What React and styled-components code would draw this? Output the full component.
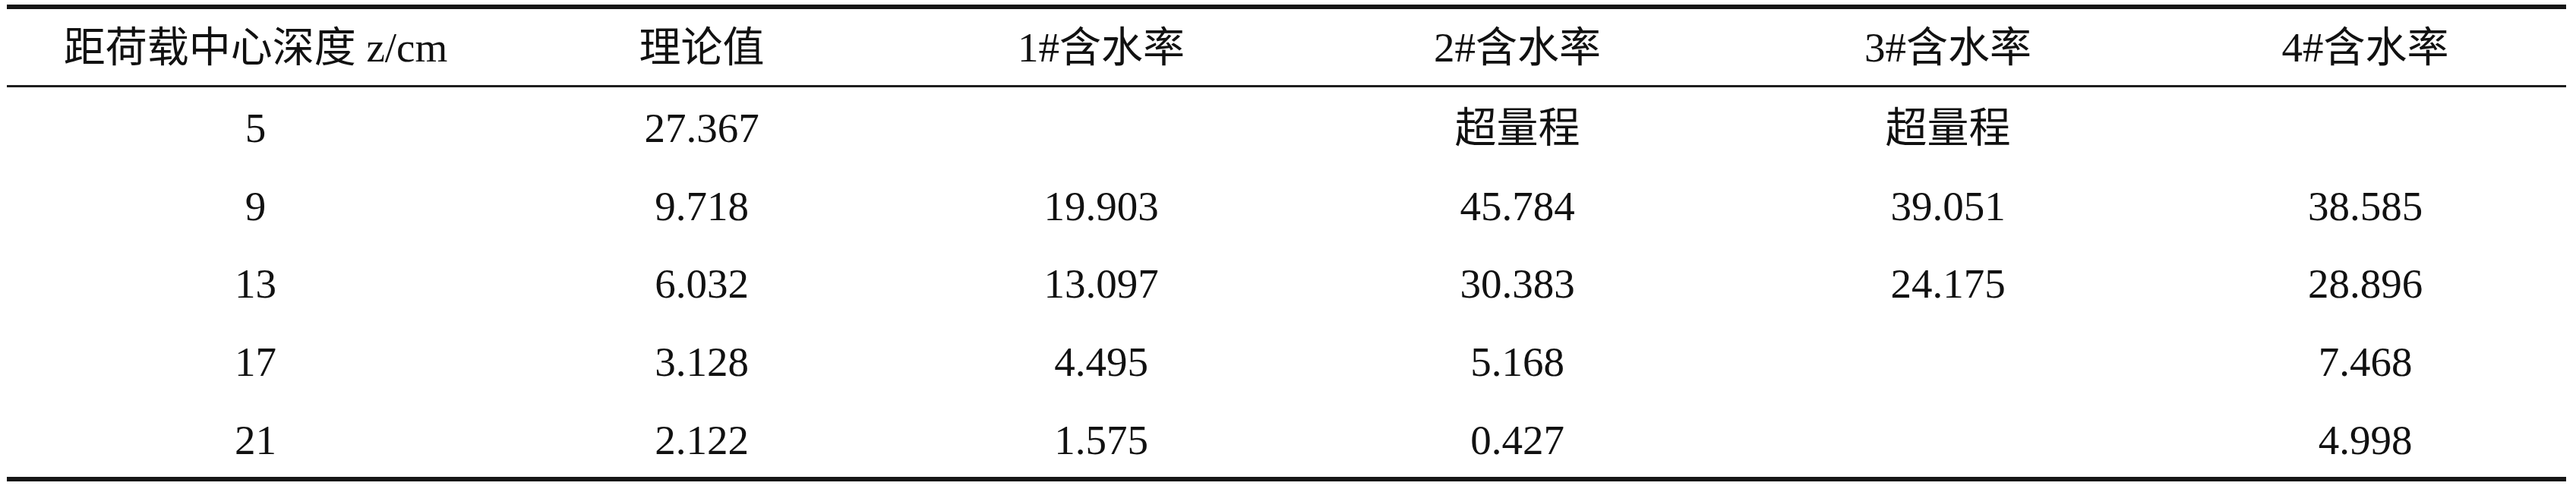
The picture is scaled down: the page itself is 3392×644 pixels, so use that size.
import React from "react";
import styled, { createGlobalStyle } from "styled-components";

const Global = createGlobalStyle`
  html, body { margin: 0; padding: 0; background: #ffffff; }
  body { width: 3392px; height: 644px; overflow: hidden; }
`;

const Page = styled.div`
  padding: 6px 0 0 9px;
  box-sizing: border-box;
  width: 3392px;
`;

const Table = styled.div`
  width: 3370px;
  display: grid;
  grid-template-columns: 655px 520px 532px 564px 570px 529px;
  grid-template-rows: 103px repeat(5, 102.6px);
  border-top: 6px solid #161616;
  border-bottom: 6px solid #161616;
  font-family: "Liberation Serif", "Noto Sans CJK SC", serif;
  font-size: 55px;
  line-height: 1;
  color: #111111;
`;

const HeadCell = styled.div`
  display: flex;
  align-items: center;
  justify-content: center;
  box-sizing: border-box;
  border-bottom: 3px solid #1e1e1e;
  white-space: nowrap;
`;

const Cell = styled.div`
  display: flex;
  align-items: center;
  justify-content: center;
  box-sizing: border-box;
  padding-top: 5px;
  white-space: nowrap;
`;

const headers = ["距荷载中心深度 z/cm", "理论值", "1#含水率", "2#含水率", "3#含水率", "4#含水率"];

const rows = [
  ["5", "27.367", "", "超量程", "超量程", ""],
  ["9", "9.718", "19.903", "45.784", "39.051", "38.585"],
  ["13", "6.032", "13.097", "30.383", "24.175", "28.896"],
  ["17", "3.128", "4.495", "5.168", "", "7.468"],
  ["21", "2.122", "1.575", "0.427", "", "4.998"],
];

export default function App() {
  return (
    <Page>
      <Global />
      <Table>
        {headers.map((h, i) => (
          <HeadCell key={`h${i}`}>{h}</HeadCell>
        ))}
        {rows.map((r, i) =>
          r.map((c, j) => <Cell key={`${i}-${j}`}>{c}</Cell>)
        )}
      </Table>
    </Page>
  );
}
